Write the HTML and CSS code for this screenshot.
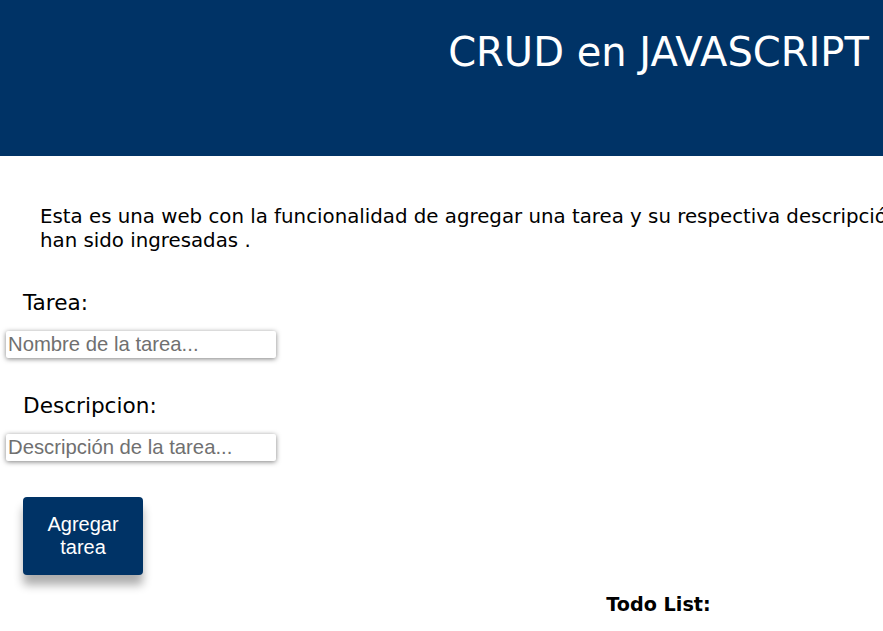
FILE: index.html
```html
<!DOCTYPE html>
<html lang="es">
<head>
<meta charset="utf-8">
<title>CRUD en JAVASCRIPT</title>
<link rel="stylesheet" href="styles.css">
</head>
<body>
<div class="page">
  <header class="header">
    <h1 class="title">CRUD en JAVASCRIPT</h1>
  </header>
  <p class="intro">Esta es una web con la funcionalidad de agregar una tarea y su respectiva descripción, y luego mostrar en una lista las tareas que<br>han sido ingresadas .</p>
  <form class="form">
    <label class="label" for="tarea">Tarea:</label>
    <input class="field" id="tarea" type="text" placeholder="Nombre de la tarea...">
    <label class="label label-desc" for="desc">Descripcion:</label>
    <input class="field" id="desc" type="text" placeholder="Descripción de la tarea...">
    <button class="btn" type="button">Agregar tarea</button>
  </form>
  <h3 class="todo">Todo List:</h3>
</div>
</body>
</html>
```

FILE: styles.css
```css
html, body {
  margin: 0;
  padding: 0;
  background: #ffffff;
}
.page {
  width: 1317px;
  font-family: "DejaVu Sans", Verdana, sans-serif;
  color: #000;
}
.header {
  background: #003366;
  height: 156px;
  display: flex;
  justify-content: center;
  align-items: flex-start;
}
.title {
  margin: 28px 0 0 0;
  font-size: 40px;
  font-weight: normal;
  color: #ffffff;
  line-height: 48px;
}
.intro {
  margin: 49px 0 0 40px;
  font-size: 19.8px;
  line-height: 24px;
  white-space: nowrap;
}
.form {
  display: flex;
  flex-direction: column;
  align-items: flex-start;
  margin-top: 37px;
}
.label {
  margin-left: 23px;
  font-size: 21.6px;
  line-height: 26px;
}
.label-desc {
  margin-top: 35px;
}
.field {
  margin: 15px 0 0 6px;
  width: 270px;
  height: 27px;
  box-sizing: border-box;
  border: none;
  border-radius: 2px;
  padding: 0 2px;
  font-family: "Liberation Sans", Arial, sans-serif;
  font-size: 20.3px;
  background: #fff;
  box-shadow: 0 1px 5px rgba(0,0,0,0.5);
  outline: none;
}
.field::placeholder {
  color: #707070;
}
.btn {
  margin: 36px 0 0 23px;
  width: 120px;
  height: 78px;
  background: #003366;
  color: #fff;
  border: none;
  border-radius: 4px;
  font-family: "Liberation Sans", Arial, sans-serif;
  font-size: 20px;
  line-height: 23px;
  padding: 0 20px;
  box-shadow: 0 10px 10px rgba(0,0,0,0.32);
}
.todo {
  margin: 18px 0 0 0;
  text-align: center;
  font-size: 19.2px;
  font-weight: bold;
}
```
